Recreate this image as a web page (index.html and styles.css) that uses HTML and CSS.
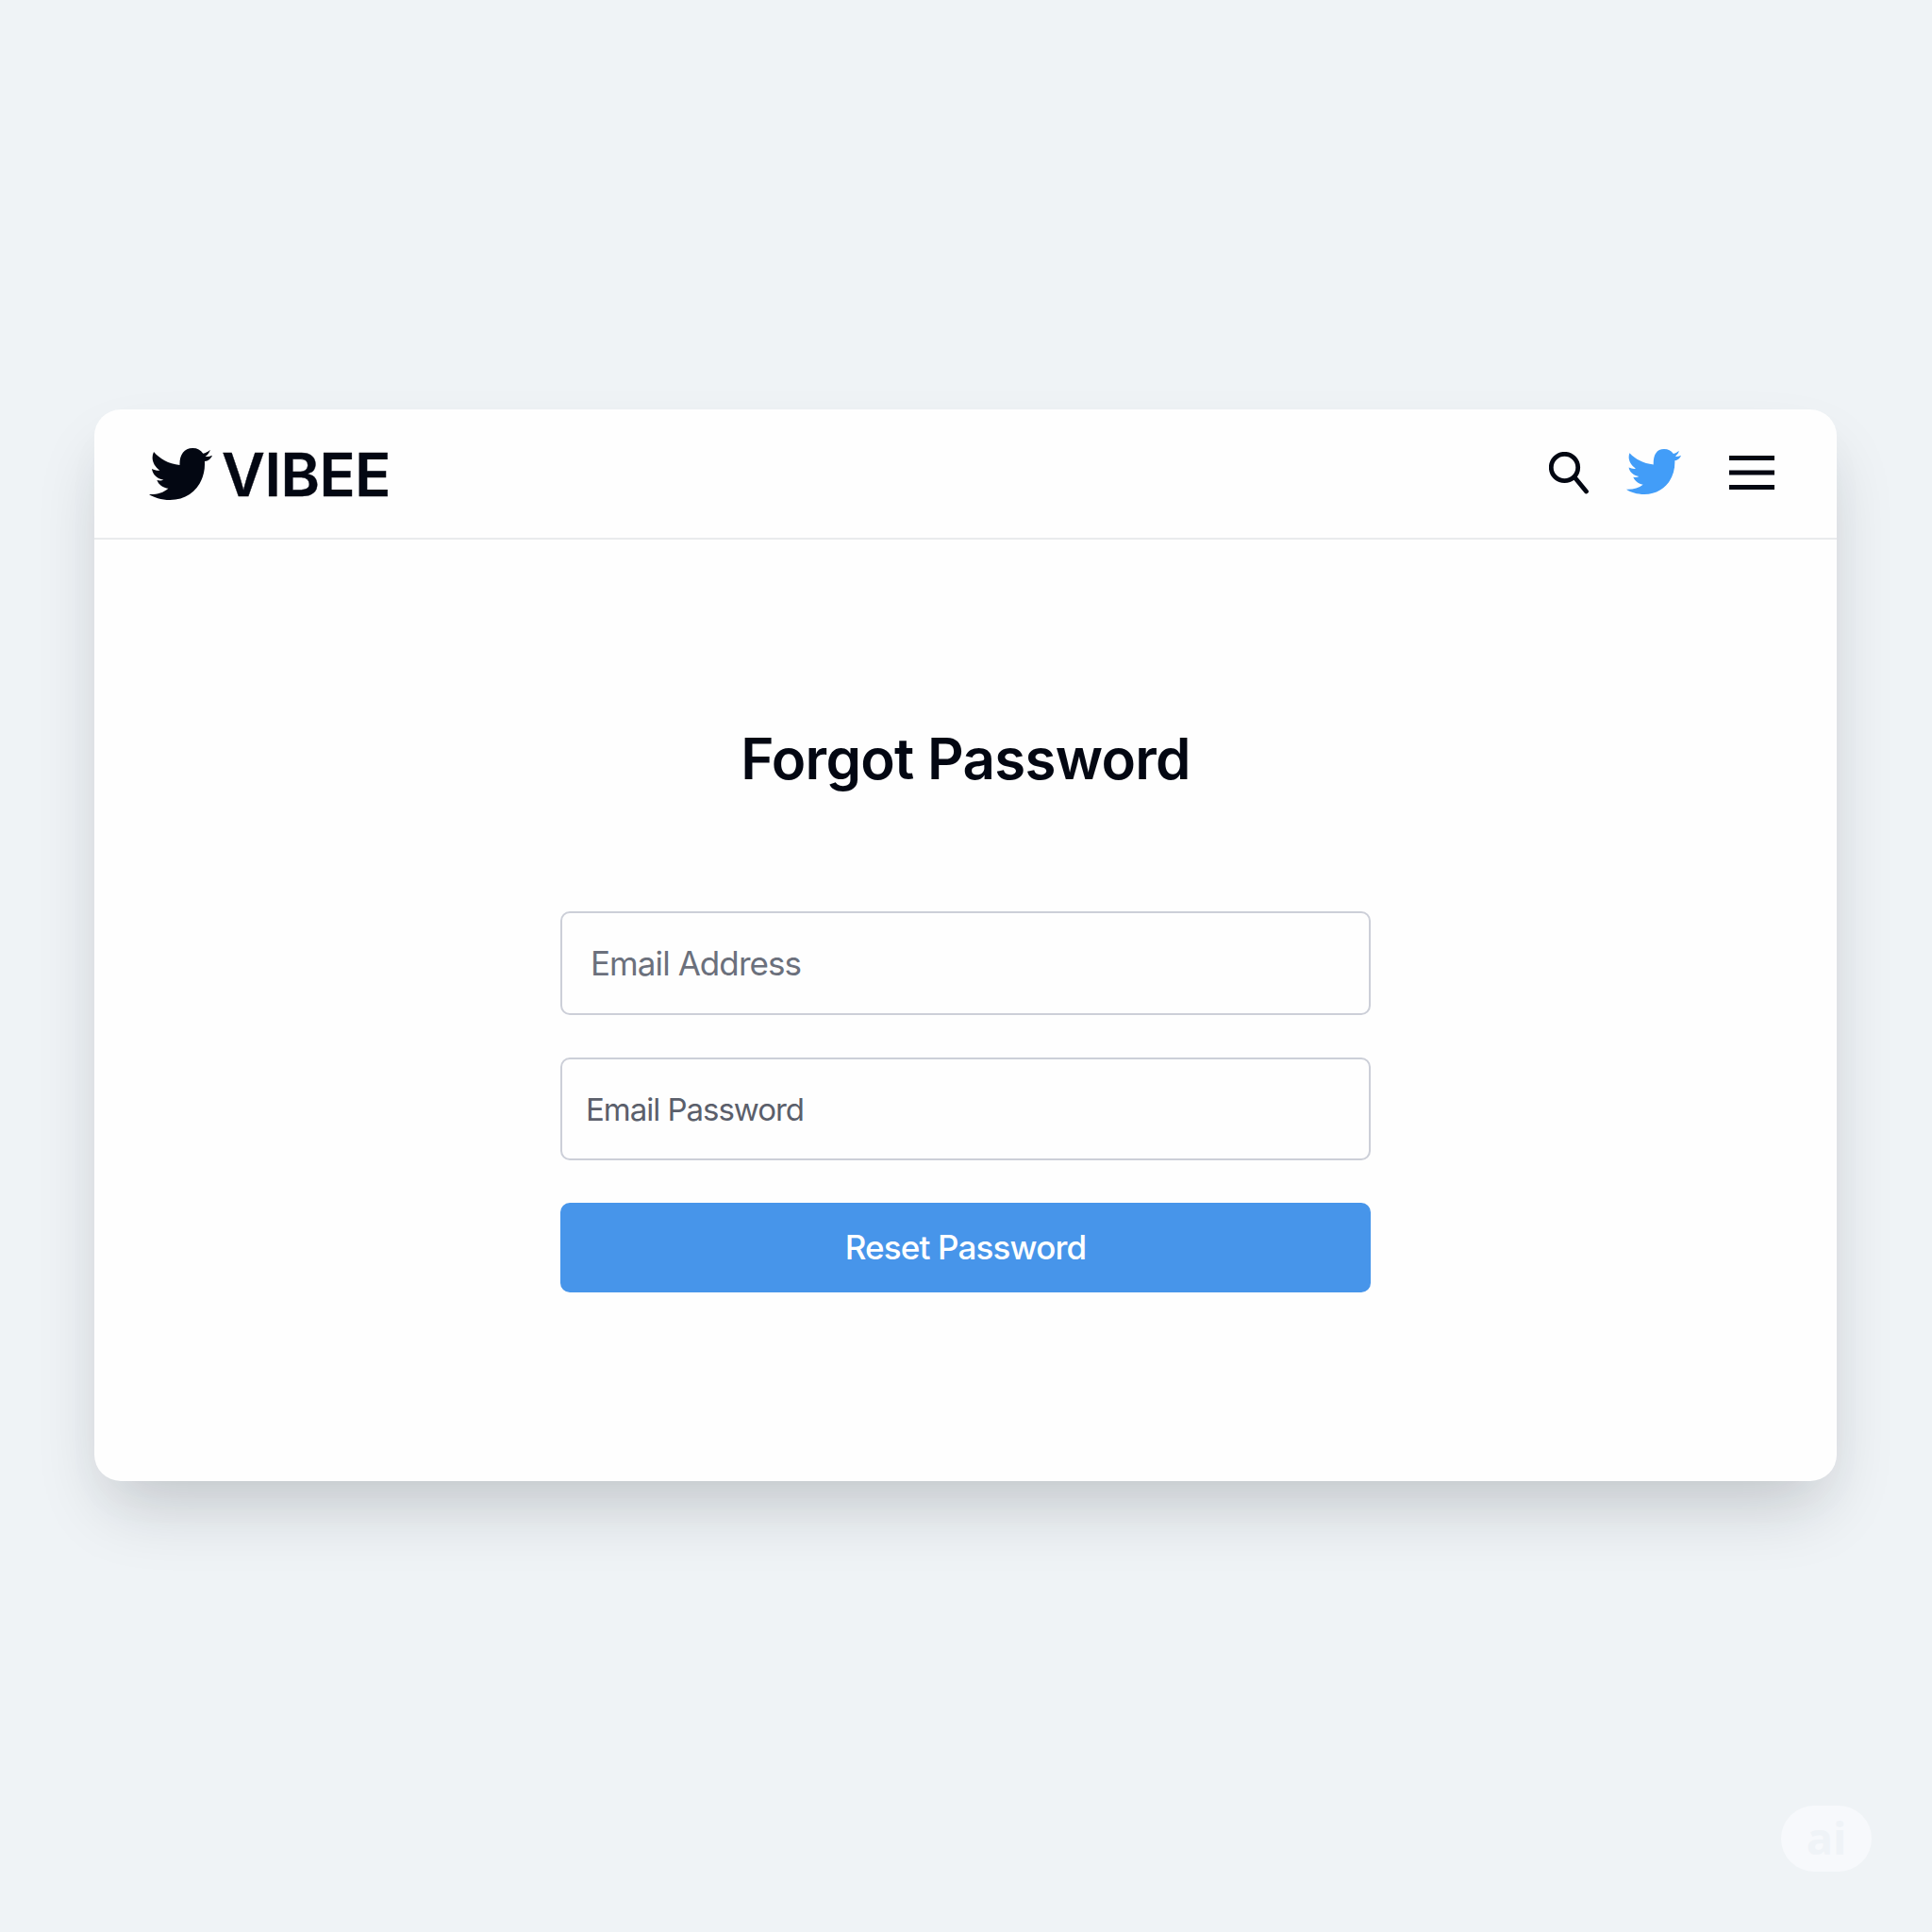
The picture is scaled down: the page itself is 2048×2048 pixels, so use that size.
FILE: index.html
```html
<!DOCTYPE html>
<html lang="en">
<head>
<meta charset="utf-8">
<title>Forgot Password</title>
<link rel="stylesheet" href="styles.css">
</head>
<body>
<main class="card">
  <header class="header">
    <div class="brand">
      <svg class="brand-bird" viewBox="0 0 200 165" preserveAspectRatio="none"><path d="M15 12C34 34 61 50 97 54C96 22 110 0 138 0C153 0 163 6 171 17C179 15 187 11 194 5C191 14 186 20 178 27C187 28 194 26 200 23C195 35 188 40 176 42C180 110 135 165 66 165C39 165 14 157 0 147C25 148 45 142 61 128C44 127 31 117 25 102C33 104 39 104 46 101C25 98 11 83 9 66C18 71 27 72 34 71C13 56 5 32 15 12Z"/></svg>
      <span class="brand-name">VIBEE</span>
    </div>
    <nav class="actions">
      <svg class="icon-search" viewBox="0 0 44 46"><circle cx="16.5" cy="16.5" r="14.2"/><path d="M28 28L39.5 42"/></svg>
      <svg class="icon-bird" viewBox="0 0 200 165" preserveAspectRatio="none"><path d="M12 15C34 38 61 52 99 57C98 22 110 0 138 0C153 0 163 6 172 17C180 15 187 11 193 6C191 14 186 20 179 27C187 28 194 26 200 23C195 35 188 40 177 42C180 110 135 165 66 165C39 165 16 158 0 147C25 148 45 142 61 130C44 127 31 117 25 102C33 104 39 104 46 100C25 95 11 83 9 67C18 71 27 73 34 71C13 56 4 34 12 15Z"/></svg>
      <svg class="icon-menu" viewBox="0 0 48 36"><path d="M0 2.5H48M0 18H48M0 33.5H48"/></svg>
    </nav>
  </header>
  <form class="form">
    <h1 class="title">Forgot Password</h1>
    <div class="field field-address"><span>Email Address</span></div>
    <div class="field field-password"><span>Email Password</span></div>
    <div class="submit"><span>Reset Password</span></div>
  </form>
</main>
<div class="badge">ai</div>
</body>
</html>
```
FILE: styles.css
```css
* { box-sizing: border-box; }
body {
  margin: 0;
  height: 2048px;
  padding: 434px 101px 0 100px;
  overflow: hidden;
  background: #eff3f6;
  font-family: Inter, "Liberation Sans", sans-serif;
  color: #030712;
}
.card {
  height: 1136px;
  border-radius: 28px;
  background: #fefefe;
  box-shadow: 0 38px 76px -16px rgba(22, 26, 34, 0.2), 0 24px 48px rgba(22, 26, 36, 0.02);
}
.header {
  display: flex;
  justify-content: space-between;
  height: 138px;
  padding: 0 66px 0 58px;
  border-bottom: 2px solid #e9ebed;
}
.brand { display: flex; align-items: center; gap: 10px; }
.brand-bird { width: 67px; height: 55px; fill: #030712; }
.brand-name { padding-top: 2px; font-size: 63px; font-weight: 600; line-height: 1; letter-spacing: -0.4px; -webkit-text-stroke: 0.4px #030712; }
.actions { display: flex; align-items: flex-start; padding-top: 42px; }
.icon-search { width: 44px; height: 46px; margin: 3px 38px 0 0; fill: none; stroke: #030712; stroke-width: 4.8; stroke-linecap: round; }
.icon-bird { width: 58px; height: 48px; margin-right: 51px; fill: #429df8; }
.icon-menu { width: 48px; height: 36px; margin-top: 7px; fill: none; stroke: #030712; stroke-width: 5; }
.form { display: flex; flex-direction: column; width: 859px; margin: 0 auto; padding-top: 196px; }
.title { margin: 0 0 125px; height: 73px; font-size: 60px; font-weight: 600; line-height: 73px; letter-spacing: -0.7px; text-align: center; white-space: nowrap; }
.field {
  display: flex;
  align-items: center;
  height: 110px;
  border: 2px solid #cccfd8;
  border-radius: 10px;
  white-space: nowrap;
}
.field-address { margin-bottom: 45px; padding-left: 30px; font-size: 35px; letter-spacing: -0.92px; color: #6b707c; }
.field-password { height: 109px; margin-bottom: 45px; padding-left: 25px; font-size: 33px; letter-spacing: -1.02px; color: #5b5f6b; }
.submit {
  display: flex;
  align-items: center;
  justify-content: center;
  height: 95px;
  padding-bottom: 2px;
  border-radius: 10px;
  background: #4795ea;
  color: #fff;
  font-size: 35px;
  font-weight: 500;
  letter-spacing: -0.85px;
}
.badge {
  position: absolute;
  left: 1888px;
  top: 1914px;
  width: 96px;
  height: 70px;
  border-radius: 35px;
  background: #f7f9fc;
  color: #eff3f7;
  font: 700 47px/68px "Open Sans", sans-serif;
  text-align: center;
}
```
